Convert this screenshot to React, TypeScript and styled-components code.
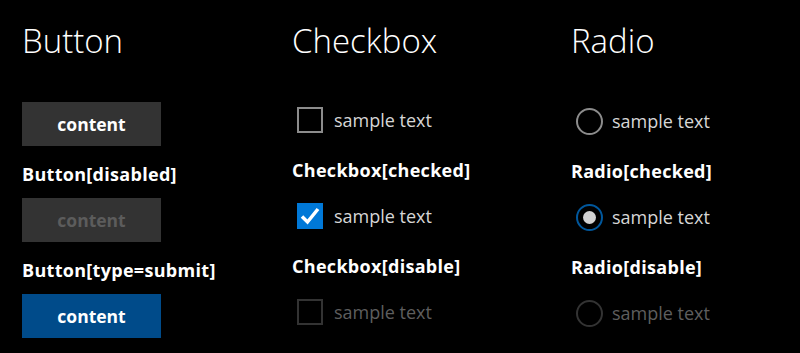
import React from 'react'
import styled, { createGlobalStyle } from 'styled-components'

const GlobalStyle = createGlobalStyle`
  html, body {
    margin: 0;
    background-color: #000;
  }
  body {
    font-family: 'Open Sans', 'Noto Sans', sans-serif;
    color: #fff;
  }
`

const Page = styled.div`
  display: grid;
  grid-template-columns: 270px 279px 1fr;
  padding: 19px 0 0 22px;
  height: 353px;
  box-sizing: border-box;
  background-color: #000;
`

const Column = styled.section`
  display: flex;
  flex-direction: column;
`

const Title = styled.h1`
  margin: 0 0 39px;
  font-size: 33px;
  font-weight: 300;
  line-height: 44px;
  color: #fff;
`

const List = styled.div<{ $shift?: number }>`
  display: flex;
  flex-direction: column;
  margin-top: ${(p) => -(p.$shift || 0)}px;
`

const Label = styled.div`
  margin: 16px 0 12px;
  font-size: 18px;
  font-weight: 700;
  line-height: 24px;
  letter-spacing: 0.3px;
  color: #fff;
`

const Row = styled.div`
  display: flex;
  align-items: center;
  height: 44px;
`

const Button = styled.button<{ $primary?: boolean }>`
  width: 139px;
  height: 44px;
  border: none;
  border-radius: 0;
  padding: 0;
  font-family: 'Open Sans', 'Noto Sans', sans-serif;
  font-size: 17.5px;
  font-weight: 700;
  color: #fff;
  background-color: ${(p) => (p.$primary ? '#004b8a' : '#333')};

  &:disabled {
    color: #5c5c5c;
  }
`

const Option = styled.label<{ $disabled?: boolean; $gap?: number }>`
  display: flex;
  align-items: center;
  gap: ${(p) => p.$gap ?? 11}px;
  padding-left: 5px;
  font-size: 18px;
  font-weight: 400;
  color: ${(p) => (p.$disabled ? '#5e5e5e' : '#d6d6d6')};
`

const Box = styled.span<{ $checked?: boolean; $disabled?: boolean }>`
  display: flex;
  align-items: center;
  justify-content: center;
  width: 26px;
  height: 26px;
  box-sizing: border-box;
  border: 2px solid
    ${(p) => (p.$checked ? '#0078d7' : p.$disabled ? '#333' : '#8c8c8c')};
  background-color: ${(p) => (p.$checked ? '#0078d7' : 'transparent')};
`

const Circle = styled.span<{ $checked?: boolean; $disabled?: boolean }>`
  display: flex;
  align-items: center;
  justify-content: center;
  width: 27px;
  height: 27px;
  box-sizing: border-box;
  border-radius: 50%;
  border: 2px solid
    ${(p) => (p.$checked ? '#00579c' : p.$disabled ? '#333' : '#8c8c8c')};
`

const Dot = styled.span`
  width: 13px;
  height: 13px;
  border-radius: 50%;
  background-color: #d2d2d2;
`

const Check = () => (
  <svg width="22" height="22" viewBox="0 0 22 22">
    <path d="M3 11.5 L8.5 17 L19 4" fill="none" stroke="#fff" strokeWidth="3.5" />
  </svg>
)

const CheckboxItem = ({ checked, disabled }: { checked?: boolean; disabled?: boolean }) => (
  <Row>
    <Option $disabled={disabled}>
      <Box $checked={checked} $disabled={disabled}>
        {checked && <Check />}
      </Box>
      sample text
    </Option>
  </Row>
)

const RadioItem = ({ checked, disabled }: { checked?: boolean; disabled?: boolean }) => (
  <Row>
    <Option $disabled={disabled} $gap={9}>
      <Circle $checked={checked} $disabled={disabled}>
        {checked && <Dot />}
      </Circle>
      sample text
    </Option>
  </Row>
)

const App = () => {
  return (
    <>
      <GlobalStyle />
      <Page>
        <Column>
          <Title>Button</Title>
          <List>
            <Row>
              <Button>content</Button>
            </Row>
            <Label>Button[disabled]</Label>
            <Row>
              <Button disabled>content</Button>
            </Row>
            <Label>Button[type=submit]</Label>
            <Row>
              <Button type="submit" $primary>
                content
              </Button>
            </Row>
          </List>
        </Column>
        <Column>
          <Title>Checkbox</Title>
          <List $shift={4}>
            <CheckboxItem />
            <Label>Checkbox[checked]</Label>
            <CheckboxItem checked />
            <Label>Checkbox[disable]</Label>
            <CheckboxItem disabled />
          </List>
        </Column>
        <Column>
          <Title>Radio</Title>
          <List $shift={3}>
            <RadioItem />
            <Label>Radio[checked]</Label>
            <RadioItem checked />
            <Label>Radio[disable]</Label>
            <RadioItem disabled />
          </List>
        </Column>
      </Page>
    </>
  )
}

export default App
